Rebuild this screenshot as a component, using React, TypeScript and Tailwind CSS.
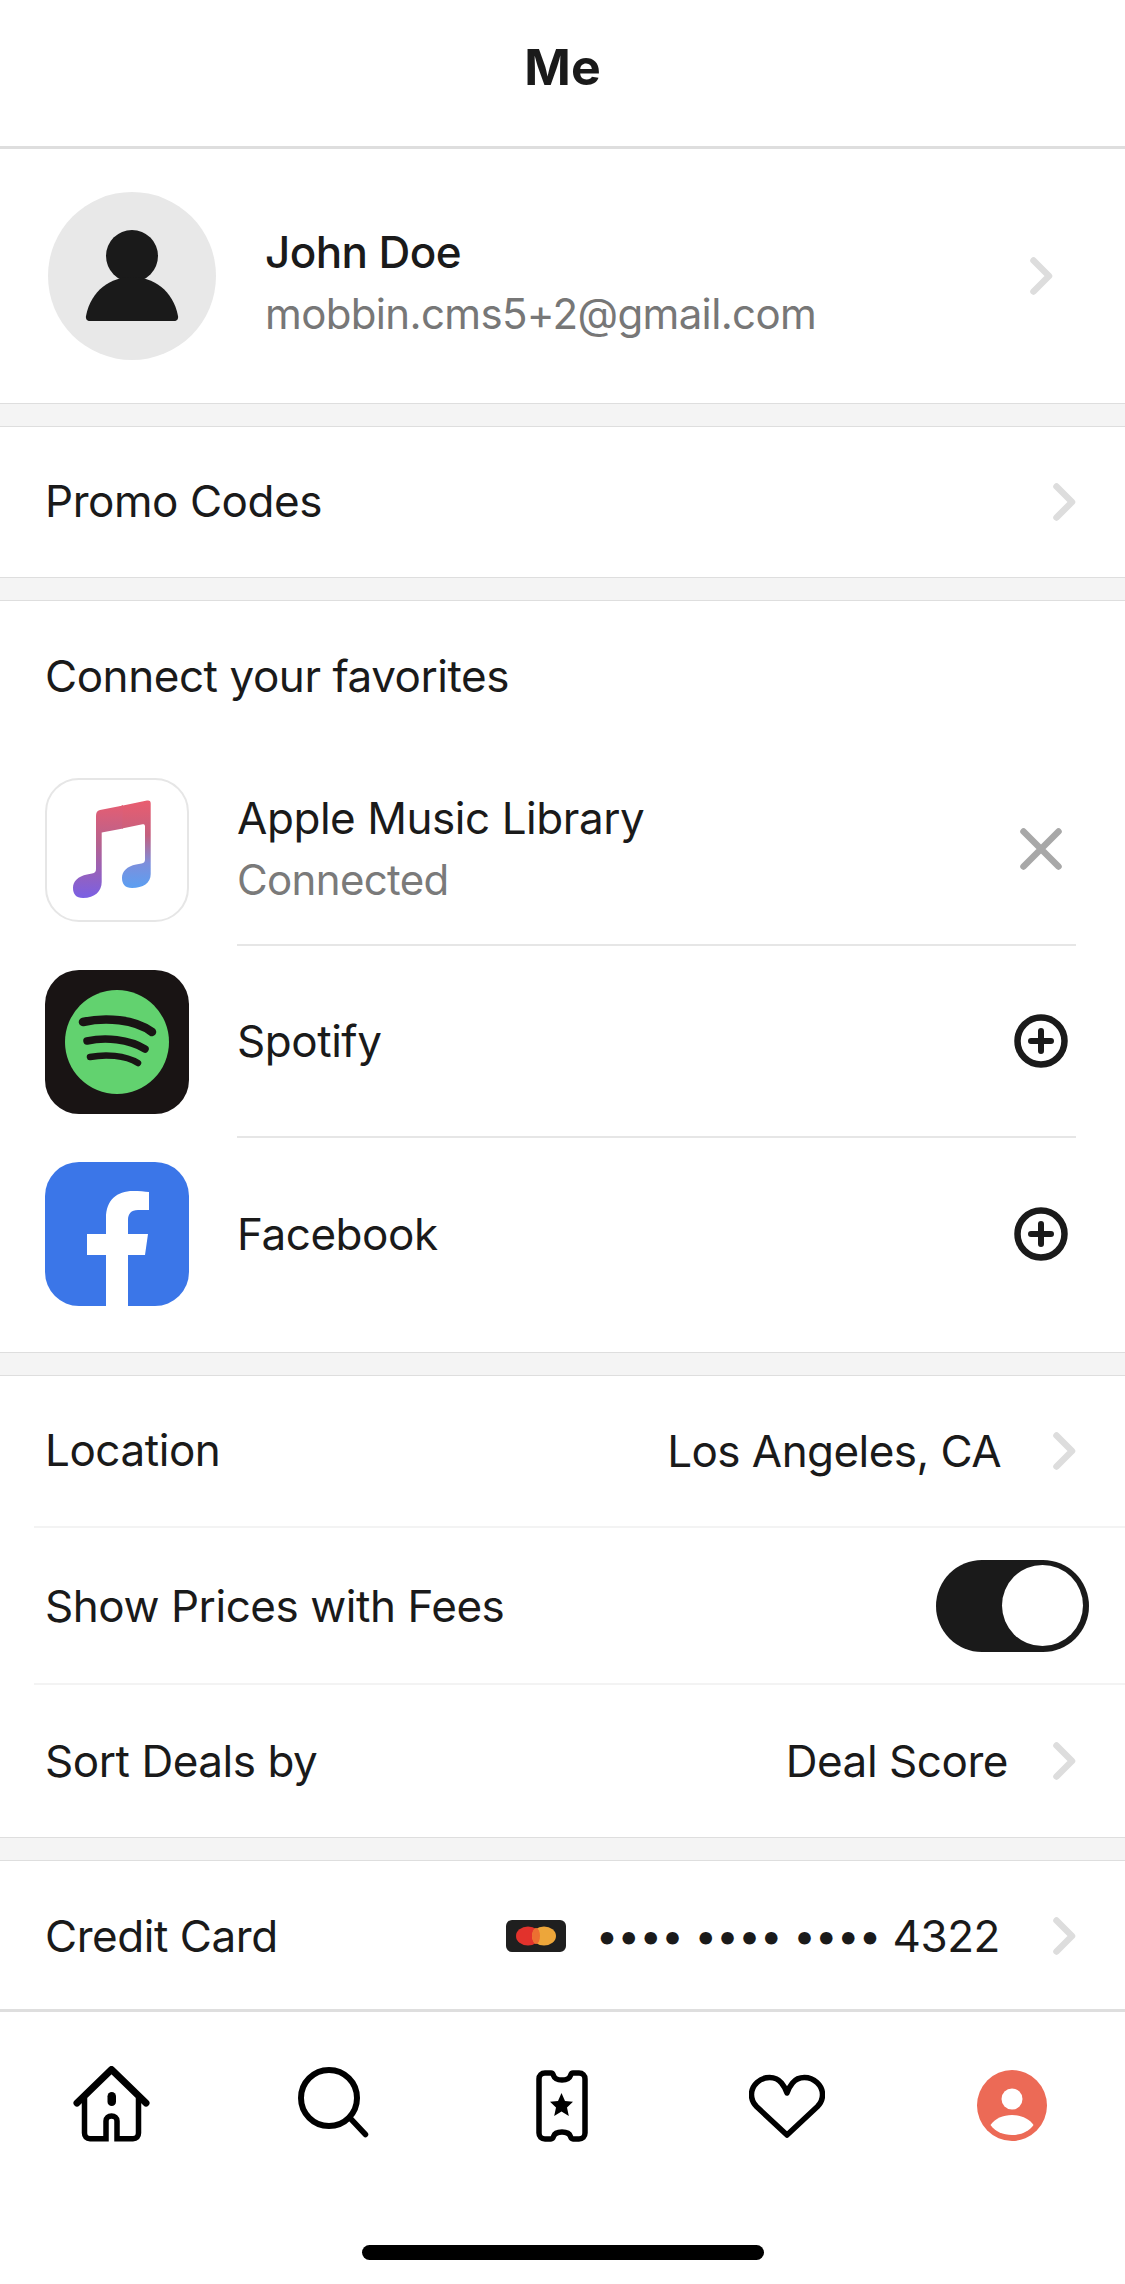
const Chevron = () => (
  <svg width="23" height="38" viewBox="0 0 23 38" fill="none" className="shrink-0">
    <path d="M3.5 3.5 L19 19 L3.5 34.5" stroke="#dddddd" strokeWidth="6.5" strokeLinecap="round" strokeLinejoin="round" />
  </svg>
)

const Gap = () => <div className="h-[24px] shrink-0 bg-[#f4f4f4] border-y border-[#dedede]" />

const PlusCircle = () => (
  <svg width="54" height="54" viewBox="0 0 54 54" fill="none" className="shrink-0">
    <circle cx="27" cy="27" r="23.5" stroke="#1a1a1a" strokeWidth="6.5" />
    <path d="M27 17 V37 M17 27 H37" stroke="#1a1a1a" strokeWidth="6" strokeLinecap="round" />
  </svg>
)

const AppleMusicIcon = () => (
  <div className="h-[144px] w-[144px] shrink-0 rounded-[34px] border-2 border-[#e6e6e6] bg-white">
    <svg width="140" height="140" viewBox="2 2 140 140">
      <defs>
        <linearGradient id="noteLeft" x1="0" y1="22" x2="0" y2="120" gradientUnits="userSpaceOnUse">
          <stop offset="0" stopColor="#ea5d6f" />
          <stop offset="0.45" stopColor="#b5628f" />
          <stop offset="1" stopColor="#7a60e4" />
        </linearGradient>
        <linearGradient id="noteRight" x1="0" y1="22" x2="0" y2="110" gradientUnits="userSpaceOnUse">
          <stop offset="0" stopColor="#ea5d6f" />
          <stop offset="0.4" stopColor="#c4607f" />
          <stop offset="0.72" stopColor="#7d8fdc" />
          <stop offset="1" stopColor="#5b9ff2" />
        </linearGradient>
      </defs>
      <path
        d="M51 38 C51 34.5 52 32.5 55 32 L78 27.5 V40.5 L56.7 54.5 V104 C56.7 113 50 120 38 120 C31 120 28 116 28 110 C28 103 33 98.5 42 96.5 L47 95.5 C50 95 51 93.5 51 91 Z"
        fill="url(#noteLeft)"
      />
      <path d="M56.7 54.5 V38 L78 27 V50.5 Z" fill="url(#noteLeft)" />
      <path
        d="M78 27.5 L102 22.5 C104.5 22 105.7 23 105.7 25.5 V96 C105.7 105 98 110 87 110 C80 110 77 106 77 100 C77 93 82 88.5 91 86.5 L96.5 85.5 C99 85 100 84 100 81.5 V48.5 C100 46.5 99 46 97.5 46.2 L77 50.5 Z"
        fill="url(#noteRight)"
      />
    </svg>
  </div>
)

const SpotifyIcon = () => (
  <div className="flex h-[144px] w-[144px] shrink-0 items-center justify-center rounded-[34px] bg-[#191414]">
    <svg width="104" height="104" viewBox="20 20 104 104" fill="none">
      <circle cx="72" cy="72" r="52" fill="#62d26f" />
      <path d="M38 52 C60 47 90 49 107 62" stroke="#191414" strokeWidth="8.5" strokeLinecap="round" />
      <path d="M42 71 C60 67 84 69 100 79" stroke="#191414" strokeWidth="7.5" strokeLinecap="round" />
      <path d="M45 87 C60 84 80 85 93 93" stroke="#191414" strokeWidth="6.5" strokeLinecap="round" />
    </svg>
  </div>
)

const FacebookIcon = () => (
  <div className="h-[144px] w-[144px] shrink-0 overflow-hidden rounded-[34px] bg-[#3b76e8]">
    <svg width="144" height="144" viewBox="0 0 144 144">
      <path
        d="M61 144 V93 H42 V72 H61 V56 C61 38 72 29 88 29 C94 29 100 29.5 104 30 V48 H93 C86 48 83 52 83 58 V72 H103 L100 93 H83 V144 Z"
        fill="#ffffff"
      />
    </svg>
  </div>
)

const MasterCard = () => (
  <svg width="60" height="32" viewBox="0 0 60 32" className="shrink-0">
    <rect width="60" height="32" rx="6" fill="#1f1f1f" />
    <ellipse cx="22" cy="16" rx="12" ry="9.5" fill="#e2322c" />
    <ellipse cx="38" cy="16" rx="12" ry="9.5" fill="#eda63a" />
    <ellipse cx="30" cy="16" rx="4" ry="8" fill="#ec6f31" />
  </svg>
)

const HomeIcon = () => (
  <svg width="77" height="76" viewBox="0 0 77 76" fill="none">
    <path d="M4 37 L38.5 3.5 L73 37" stroke="#000" strokeWidth="7" strokeLinecap="round" strokeLinejoin="round" />
    <path
      d="M11.5 32 V67 C11.5 70.5 13.5 72.8 17 72.8 H33 V55 C33 52 35.5 50 38.5 50 C41.5 50 44 52 44 55 V72.8 H60 C63.5 72.8 65.5 70.5 65.5 67 V32"
      stroke="#000"
      strokeWidth="5.5"
    />
    <rect x="34.5" y="26" width="8.5" height="14" rx="4.25" fill="#000" />
  </svg>
)

const SearchIcon = () => (
  <svg width="71" height="71" viewBox="0 0 71 71" fill="none">
    <circle cx="31" cy="31" r="28" stroke="#000" strokeWidth="6" />
    <path d="M52 51 L67.5 67.5" stroke="#000" strokeWidth="5.5" strokeLinecap="round" />
  </svg>
)

const TicketIcon = () => (
  <svg width="52" height="72" viewBox="0 0 52 72" fill="none">
    <path
      d="M9 3 H15 C16.5 3 17 4 17.5 5.5 C18.5 8.5 21.5 10 26 10 C30.5 10 33.5 8.5 34.5 5.5 C35 4 35.5 3 37 3 H43 C46.5 3 49 5.5 49 9 V63 C49 66.5 46.5 69 43 69 H37 C35.5 69 35 68 34.5 66.5 C33.5 63.5 30.5 62 26 62 C21.5 62 18.5 63.5 17.5 66.5 C17 68 16.5 69 15 69 H9 C5.5 69 3 66.5 3 63 V9 C3 5.5 5.5 3 9 3 Z"
      stroke="#000"
      strokeWidth="5.5"
      strokeLinejoin="round"
    />
    <path d="M25.5 23 L29 31 L37 31.8 L31 37.5 L32.8 46 L25.5 41.6 L18.2 46 L20 37.5 L14 31.8 L22 31 Z" fill="#000" />
  </svg>
)

const HeartIcon = () => (
  <svg width="76" height="65" viewBox="0 0 76 65" fill="none">
    <path
      d="M38 61 L7.5 32.5 C0.5 25.5 1 15 8 8.5 C15 2 26.5 1.5 32.5 9 C35 12 37 15.5 38 19 C39 15.5 41 12 43.5 9 C49.5 1.5 61 2 68 8.5 C75 15 75.5 25.5 68.5 32.5 Z"
      stroke="#000"
      strokeWidth="5.5"
      strokeLinejoin="round"
    />
  </svg>
)

const ProfileIcon = () => (
  <svg width="70" height="71" viewBox="0 0 70 71">
    <ellipse cx="35" cy="35.5" rx="35" ry="35.5" fill="#ec6a56" />
    <circle cx="35" cy="29" r="10.5" fill="#fff" />
    <path d="M13.5 55 C18 48.5 26 45 35 45 C44 45 52 48.5 56.5 55 C52 61.5 44 65 35 65 C26 65 18 61.5 13.5 55 Z" fill="#fff" />
  </svg>
)

const ConnectRow = ({ icon, name, sub, action, divider }: { icon: React.ReactNode; name: string; sub?: string; action: React.ReactNode; divider?: boolean }) => (
  <div className="flex h-[192px] items-center pl-[45px]">
    {icon}
    <div className={`ml-[48px] mr-[49px] flex h-full flex-1 items-center justify-between ${divider ? "border-b-2 border-[#e6e6e6]" : ""}`}>
      <div>
        <div className="text-[44px] leading-[62px] tracking-[-0.45px]">{name}</div>
        {sub && <div className="text-[42px] leading-[62px] tracking-[-0.65px] text-[#7a7a7a]">{sub}</div>}
      </div>
      <div className="mr-[8px] flex w-[54px] justify-center">{action}</div>
    </div>
  </div>
)

export default function App() {
  return (
    <div className="flex h-[2284px] w-[1125px] flex-col overflow-hidden bg-white text-[#1a1a1a]" style={{ fontFamily: "Inter, 'Liberation Sans', sans-serif" }}>
      <header className="flex h-[149px] shrink-0 items-center justify-center border-b-[3px] border-[#dedede] pb-[12px]">
        <h1 className="text-[50px] font-bold">Me</h1>
      </header>

      <main className="flex-1 overflow-hidden tracking-[-0.45px]">
        <section className="flex h-[254px] items-center pl-[48px] pr-[72px]">
          <div className="flex h-[168px] w-[168px] shrink-0 items-center justify-center rounded-full bg-[#e8e8e8]">
            <svg width="94" height="92" viewBox="0 0 94 92">
              <ellipse cx="47" cy="26" rx="26" ry="26" fill="#1a1a1a" />
              <path d="M47 47 C68 47 88 60 93 86 C93.5 89 92 91 89 91 H5 C2 91 0.5 89 1 86 C6 60 26 47 47 47 Z" fill="#1a1a1a" />
            </svg>
          </div>
          <div className="ml-[49px] flex-1 pt-[14px]">
            <div className="text-[44px] font-medium leading-[62px] tracking-[-0.6px]">John Doe</div>
            <div className="text-[42px] leading-[62px] tracking-[-0.65px] text-[#777777]">mobbin.cms5+2@gmail.com</div>
          </div>
          <Chevron />
        </section>
        <Gap />

        <section className="flex h-[150px] items-center justify-between pl-[45px] pr-[49px] text-[44px]">
          <span className="pb-[2px]">Promo Codes</span>
          <Chevron />
        </section>
        <Gap />

        <section className="h-[751px]">
          <div className="flex h-[153px] items-center pb-[4px] pl-[45px] text-[44px]">Connect your favorites</div>
          <ConnectRow
            icon={<AppleMusicIcon />}
            name="Apple Music Library"
            sub="Connected"
            divider
            action={
              <svg width="42" height="42" viewBox="0 0 42 42" fill="none">
                <path d="M3.5 3.5 L38.5 38.5 M38.5 3.5 L3.5 38.5" stroke="#a8a8a8" strokeWidth="6.5" strokeLinecap="round" />
              </svg>
            }
          />
          <ConnectRow icon={<SpotifyIcon />} name="Spotify" divider action={<PlusCircle />} />
          <ConnectRow icon={<FacebookIcon />} name="Facebook" action={<PlusCircle />} />
        </section>
        <Gap />

        <section className="text-[44px]">
          <div className="ml-[34px] flex h-[152px] items-center justify-between border-b-2 border-[#f3f3f3] pl-[11px] pr-[49px]">
            <span className="pb-[2px]">Location</span>
            <div className="flex items-center gap-[52px]">
              <span className="tracking-[-0.55px]">Los Angeles, CA</span>
              <Chevron />
            </div>
          </div>
          <div className="ml-[34px] flex h-[157px] items-center justify-between border-b-2 border-[#f3f3f3] pl-[11px] pr-[36px]">
            <span>Show Prices with Fees</span>
            <div className="flex h-[92px] w-[153px] items-center justify-end rounded-full bg-[#1a1a1a] pr-[6px]">
              <div className="h-[81px] w-[81px] rounded-full bg-white" />
            </div>
          </div>
          <div className="ml-[34px] flex h-[152px] items-center justify-between pl-[11px] pr-[49px]">
            <span>Sort Deals by</span>
            <div className="flex items-center gap-[45px]">
              <span>Deal Score</span>
              <Chevron />
            </div>
          </div>
        </section>
        <Gap />

        <section className="flex h-[150px] items-center justify-between pl-[45px] pr-[49px] text-[44px]">
          <span>Credit Card</span>
          <div className="flex items-center">
            <MasterCard />
            <span className="ml-[30px] text-[40px] tracking-[-0.7px] [word-spacing:1px]">•••• •••• ••••</span>
            <span className="ml-[12px]">4322</span>
            <span className="ml-[53px]">
              <Chevron />
            </span>
          </div>
        </section>
      </main>

      <nav className="relative h-[275px] shrink-0 border-t-[3px] border-[#dedede]">
        <div className="flex items-start pl-[73px] pt-[54px]">
          <HomeIcon />
          <div className="ml-[148px] mt-[1px]">
            <SearchIcon />
          </div>
          <div className="ml-[167px] mt-[4px]">
            <TicketIcon />
          </div>
          <div className="ml-[161px] mt-[8px]">
            <HeartIcon />
          </div>
          <div className="ml-[152px] mt-[4px]">
            <ProfileIcon />
          </div>
        </div>
        <div className="absolute bottom-[24px] left-[362px] h-[15px] w-[402px] rounded-full bg-black" />
      </nav>
    </div>
  )
}
